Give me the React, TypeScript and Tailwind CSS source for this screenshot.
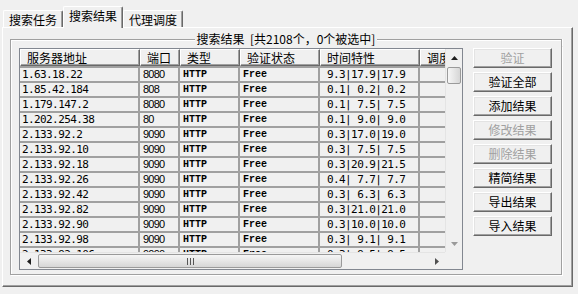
import React from "react";

interface ProxyRow {
  ip: string;
  port: string;
  kind: string;
  status: string;
  timing: string;
}

const proxyRows: ProxyRow[] = [
  { ip: "1.63.18.22", port: "8080", kind: "HTTP", status: "Free", timing: " 9.3|17.9|17.9" },
  { ip: "1.85.42.184", port: "808", kind: "HTTP", status: "Free", timing: " 0.1| 0.2| 0.2" },
  { ip: "1.179.147.2", port: "8080", kind: "HTTP", status: "Free", timing: " 0.1| 7.5| 7.5" },
  { ip: "1.202.254.38", port: "80", kind: "HTTP", status: "Free", timing: " 0.1| 9.0| 9.0" },
  { ip: "2.133.92.2", port: "9090", kind: "HTTP", status: "Free", timing: " 0.3|17.0|19.0" },
  { ip: "2.133.92.10", port: "9090", kind: "HTTP", status: "Free", timing: " 0.3| 7.5| 7.5" },
  { ip: "2.133.92.18", port: "9090", kind: "HTTP", status: "Free", timing: " 0.3|20.9|21.5" },
  { ip: "2.133.92.26", port: "9090", kind: "HTTP", status: "Free", timing: " 0.4| 7.7| 7.7" },
  { ip: "2.133.92.42", port: "9090", kind: "HTTP", status: "Free", timing: " 0.3| 6.3| 6.3" },
  { ip: "2.133.92.82", port: "9090", kind: "HTTP", status: "Free", timing: " 0.3|21.0|21.0" },
  { ip: "2.133.92.90", port: "9090", kind: "HTTP", status: "Free", timing: " 0.3|10.0|10.0" },
  { ip: "2.133.92.98", port: "9090", kind: "HTTP", status: "Free", timing: " 0.3| 9.1| 9.1" },
  { ip: "2.133.92.106", port: "9090", kind: "HTTP", status: "Free", timing: " 0.3| 9.5| 9.5" },
];

const headers = [
  { title: "服务器地址", width: "w-[120px]" },
  { title: "端口", width: "w-[40px]" },
  { title: "类型", width: "w-[60px]" },
  { title: "验证状态", width: "w-[80px]" },
  { title: "时间特性", width: "w-[100px]" },
  { title: "调度", width: "w-[60px]" },
];

const actions = [
  { label: "验证", disabled: true },
  { label: "验证全部", disabled: false },
  { label: "添加结果", disabled: false },
  { label: "修改结果", disabled: true },
  { label: "删除结果", disabled: true },
  { label: "精简结果", disabled: false },
  { label: "导出结果", disabled: false },
  { label: "导入结果", disabled: false },
];

const Arrow: React.FC<{ dir: "up" | "down" | "left" | "right"; color: string }> = ({ dir, color }) => {
  const vertical = dir === "up" || dir === "down";
  const points = {
    up: "0,4 7,4 3.5,0",
    down: "0,0 7,0 3.5,4",
    left: "4,0 4,7 0,3.5",
    right: "0,0 0,7 4,3.5",
  }[dir];
  return (
    <svg width={vertical ? 7 : 4} height={vertical ? 4 : 7} viewBox={vertical ? "0 0 7 4" : "0 0 4 7"}>
      <polygon points={points} fill={color} />
    </svg>
  );
};

const Tab: React.FC<{ label: string; active?: boolean }> = ({ label, active }) => (
  <div
    className={
      active
        ? "relative z-10 -mb-px w-[60px] h-[22px] pb-[3px] flex items-center justify-center bg-[#f0f0f0] border-t border-l border-white border-r border-r-[#696969] rounded-t-[2px] shadow-[inset_-1px_0_0_#a0a0a0]"
        : "w-[60px] h-[17px] pt-px flex items-center justify-center border-t border-l border-white border-r border-r-[#696969] rounded-t-[2px] shadow-[inset_-1px_0_0_#a0a0a0]"
    }
  >
    {label}
  </div>
);

const ProxyTable: React.FC = () => (
  <div className="w-[444px] h-[222px] shrink-0 border border-[#828790] flex flex-col bg-[#f0f0f0]">
    <div className="flex h-[203px]">
      <div className="w-[425px] overflow-hidden flex flex-col">
        <div className="flex h-[17px] shrink-0">
          {headers.map((h) => (
            <div
              key={h.title}
              className={`${h.width} shrink-0 h-full pl-[6px] flex items-center whitespace-nowrap overflow-hidden leading-[15px] border-t border-l border-white border-r border-b border-r-[#696969] border-b-[#696969] shadow-[inset_-1px_-1px_0_#a0a0a0]`}
            >
              {h.title}
            </div>
          ))}
        </div>
        {proxyRows.map((row) => (
          <div key={row.ip} className="flex h-[15px] shrink-0 border-t-2 border-[#a0a0a0]">
            <div className="w-[120px] shrink-0 pl-[2px] border-r-2 border-[#a0a0a0] font-['DejaVu_Sans_Mono',monospace] text-[11px] tracking-[-0.6px] leading-[13px] whitespace-pre">
              {row.ip}
            </div>
            <div className="w-[40px] shrink-0 pl-[3px] border-r-2 border-[#a0a0a0] font-['Liberation_Sans',sans-serif] text-[11px] tracking-[-0.8px] leading-[13px]">
              {row.port}
            </div>
            <div className="w-[60px] shrink-0 pl-[3px] border-r-2 border-[#a0a0a0] font-['Liberation_Mono',monospace] font-bold text-[10px] leading-[13px]">
              {row.kind}
            </div>
            <div className="w-[80px] shrink-0 pl-[3px] border-r-2 border-[#a0a0a0] font-['Liberation_Mono',monospace] font-bold text-[10px] leading-[13px]">
              {row.status}
            </div>
            <div className="w-[100px] shrink-0 pl-[1px] border-r-2 border-[#a0a0a0] font-['DejaVu_Sans_Mono',monospace] text-[11px] tracking-[-0.6px] leading-[13px] whitespace-pre">
              {row.timing}
            </div>
            <div className="w-[60px] shrink-0 border-r-2 border-[#a0a0a0]" />
          </div>
        ))}
      </div>
      {/* vertical scrollbar */}
      <div className="w-[17px] flex flex-col bg-[#f0f0f0] border-l border-[#e4e4e4]">
        <div className="h-[17px] flex items-center justify-center">
          <Arrow dir="up" color="#1e1e1e" />
        </div>
        <div className="mt-px mx-px h-[17px] rounded-[2px] border border-[#9a9a9a] bg-gradient-to-r from-[#f6f6f6] to-[#d6d6d6]" />
        <div className="flex-1" />
        <div className="h-[17px] flex items-center justify-center">
          <Arrow dir="down" color="#9a9a9a" />
        </div>
      </div>
    </div>
    {/* horizontal scrollbar */}
    <div className="flex h-[17px]">
      <div className="w-[425px] flex bg-[#f0f0f0] border-t border-[#e4e4e4]">
        <div className="w-[17px] flex items-center justify-center">
          <Arrow dir="left" color="#1e1e1e" />
        </div>
        <div className="ml-px my-px w-[304px] rounded-[2px] border border-[#9a9a9a] bg-gradient-to-b from-[#f6f6f6] to-[#d6d6d6] flex items-center justify-center">
          <svg width="7" height="7" viewBox="0 0 7 7">
            <rect x="0" y="0" width="1" height="7" fill="#555" />
            <rect x="3" y="0" width="1" height="7" fill="#555" />
            <rect x="6" y="0" width="1" height="7" fill="#555" />
          </svg>
        </div>
        <div className="flex-1" />
        <div className="w-[17px] flex items-center justify-center">
          <Arrow dir="right" color="#505050" />
        </div>
      </div>
      <div className="w-[17px] bg-[#f0f0f0]" />
    </div>
  </div>
);

const App: React.FC = () => {
  return (
    <div className="w-[578px] h-[294px] bg-[#f0f0f0] overflow-hidden text-[12px] text-black font-['Noto_Sans_CJK_SC',sans-serif] select-none">
      <div className="flex items-end h-[27px] pl-[3px]">
        <Tab label="搜索任务" />
        <Tab label="搜索结果" active />
        <Tab label="代理调度" />
      </div>
      <div className="ml-[2px] w-[571px] h-[260px] pt-[4px] pl-[7px] border-t border-l border-white border-r border-b border-r-[#696969] border-b-[#696969] shadow-[inset_-1px_-1px_0_#a0a0a0]">
        <div className="w-[552px] flex flex-col">
          <div className="flex h-[14px]">
            <div className="flex-1 mt-[7px] border-t border-l border-[#a0a0a0] shadow-[inset_1px_1px_0_#fff]" />
            <span className="px-[2px] leading-[14px] whitespace-pre">搜索结果  [共2108个，0个被选中]</span>
            <div className="flex-1 mt-[7px] border-t border-r border-[#a0a0a0] shadow-[inset_0_1px_0_#fff,1px_0_0_#fff]" />
          </div>
          <div className="h-[229px] flex items-start pt-[2px] pl-[8px] border-l border-r border-b border-[#a0a0a0] shadow-[inset_1px_0_0_#fff,1px_1px_0_#fff]">
            <ProxyTable />
            <div className="ml-[10px] w-[79px] flex flex-col gap-[4px]">
              {actions.map((a) => (
                <button
                  key={a.label}
                  disabled={a.disabled}
                  className={`h-[20px] w-full flex items-center justify-center leading-[14px] bg-[#f0f0f0] border-t border-l border-white border-r border-b border-r-[#696969] border-b-[#696969] shadow-[inset_-1px_-1px_0_#a0a0a0,inset_1px_1px_0_#e3e3e3] ${
                    a.disabled ? "text-[#a0a0a0]" : "text-black"
                  }`}
                >
                  {a.label}
                </button>
              ))}
            </div>
          </div>
        </div>
      </div>
    </div>
  );
};

export default App;
